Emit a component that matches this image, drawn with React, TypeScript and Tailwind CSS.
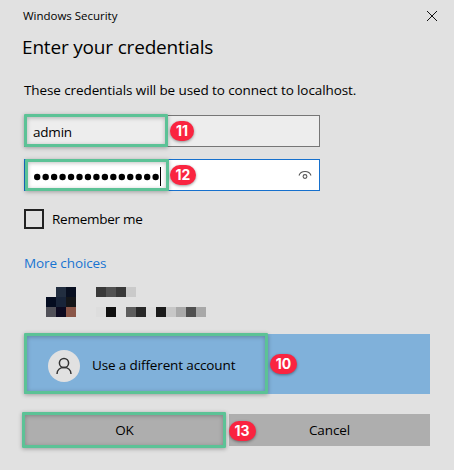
type BadgeProps = { n: string; className: string };

function Badge({ n, className }: BadgeProps) {
  return (
    <span
      className={`absolute z-10 flex h-5 items-center justify-center rounded-full bg-[#fa2440] font-['Inter'] text-[14px] leading-none font-bold tracking-normal text-white shadow-[0_1px_3px_rgba(0,0,0,0.4)] ${className}`}
    >
      {n}
    </span>
  );
}

function Highlight({ className }: { className: string }) {
  return (
    <span
      className={`pointer-events-none absolute rounded-[1px] border-3 border-[#5cc296] shadow-[0_1px_4px_rgba(0,0,0,0.3),inset_0_1px_4px_rgba(0,0,0,0.25)] ${className}`}
    />
  );
}

function Cells({ colors }: { colors: string[] }) {
  return (
    <div className="flex h-[10px]">
      {colors.map((c, i) => (
        <span key={i} className="size-[10px]" style={{ backgroundColor: c }} />
      ))}
    </div>
  );
}

const NONE = "transparent";
const avatar = [
  [NONE, "#222e40", "#080f20"],
  ["#040c20", "#182439", "#141619"],
  ["#515159", "#0c0a20", "#8a5648"],
];
const account = [
  ["#393939", "#525252", "#393939", "#cacaca"],
  [],
  ["#dddddd", "#101010", NONE, "#5d5d5d", "#282828", "#dddddd", "#1a1a1a", "#c7c7c7", "#a9a9a9", "#505050", "#a8a8a8"],
];

export default function App() {
  return (
    <main className="flex h-[470px] w-[454px] flex-col bg-[#e1e1e1] pr-6 pl-6 font-['Open_Sans','Noto_Sans',sans-serif] text-[13.5px] tracking-[-0.1px] whitespace-nowrap text-black">
      <header className="-mx-px flex h-8 items-center justify-between">
        <span className="text-[11.5px] tracking-[-0.02px]">Windows Security</span>
        <button aria-label="Close" className="mr-[-6px]">
          <svg width="10" height="10" viewBox="0 0 10 10" fill="none" stroke="#111" strokeWidth="1">
            <path d="M0 0 10 10M10 0 0 10" />
          </svg>
        </button>
      </header>
      <h1 className="-ml-[2px] h-[46px] text-[19px] leading-[31px] tracking-[-0.18px]">Enter your credentials</h1>
      <p className="h-[37px] leading-[24px]">These credentials will be used to connect to localhost.</p>

      <div className="relative flex h-8 w-[296px] shrink-0 items-center border border-[#767676] bg-[#ededed] pl-2">
        <span className="pt-[2px] tracking-[-0.2px]">admin</span>
        <Highlight className="-top-[2px] -left-px h-[33px] w-[144px]" />
        <Badge n="11" className="top-[5px] left-[145px] w-6" />
      </div>
      <div className="relative mt-3 flex h-8 w-[296px] shrink-0 items-center border border-[#1670cd] bg-white pl-[9px]">
        <svg className="mt-[3px]" width="125" height="8" fill="#000">
          {Array.from({ length: 15 }, (_, i) => (
            <circle key={i} cx={3.2 + i * 8.46} cy="4" r="3.2" />
          ))}
        </svg>
        <span className="mt-[2px] ml-px h-[19px] w-px bg-black" />
        <svg className="mr-[7px] ml-auto" width="14" height="12" viewBox="0 0 14 12" fill="none" stroke="#555" strokeWidth="1.1">
          <path d="M1 6.500C2 3.500 4.200 2.500 7 2.500s5 1 6 4" />
          <circle cx="7" cy="7.500" r="1.9" />
        </svg>
        <Highlight className="-top-px left-0 h-8 w-[144px]" />
        <Badge n="12" className="top-[5px] left-[145px] w-[26px]" />
      </div>

      <label className="mt-[18px] flex h-5 items-center gap-2">
        <span className="size-5 border-2 border-[#222]" />
        <span className="leading-5 tracking-[-0.25px]">Remember me</span>
      </label>
      <a className="mt-6 h-5 leading-5 text-[#1874d1]">More choices</a>

      <section className="mt-[14px] flex h-[30px] gap-5 pl-[22px]">
        <div>{avatar.map((row, i) => <Cells key={i} colors={row} />)}</div>
        <div>{account.map((row, i) => <Cells key={i} colors={row} />)}</div>
      </section>

      <div className="relative mt-[17px] flex h-[60px] shrink-0 items-center bg-[#80b1da] pl-6">
        <span className="mt-1 flex size-8 items-center justify-center rounded-full bg-[#e1e1e1]">
          <svg width="16" height="18" viewBox="0 0 16 18" fill="none" stroke="#333" strokeWidth="1.5">
            <circle cx="8" cy="6" r="4.6" />
            <path d="M1 17c0-4 3-6.4 7-6.4s7 2.400 7 6.400" />
          </svg>
        </span>
        <span className="mt-[2px] ml-3 tracking-[-0.13px]">Use a different account</span>
        <Highlight className="-top-px left-0 h-[61px] w-[244px]" />
        <Badge n="10" className="top-5 left-[246px] w-[27px]" />
      </div>

      <footer className="relative mt-5 flex h-8 shrink-0 gap-1 text-center leading-8">
        <button className="flex-1 bg-[#aeaeae]">OK</button>
        <button className="flex-1 bg-[#aeaeae]">Cancel</button>
        <Highlight className="-top-[2px] -left-[2px] h-9 w-[204px]" />
        <Badge n="13" className="top-[6.5px] left-[204.5px] w-[27px]" />
      </footer>
    </main>
  );
}
